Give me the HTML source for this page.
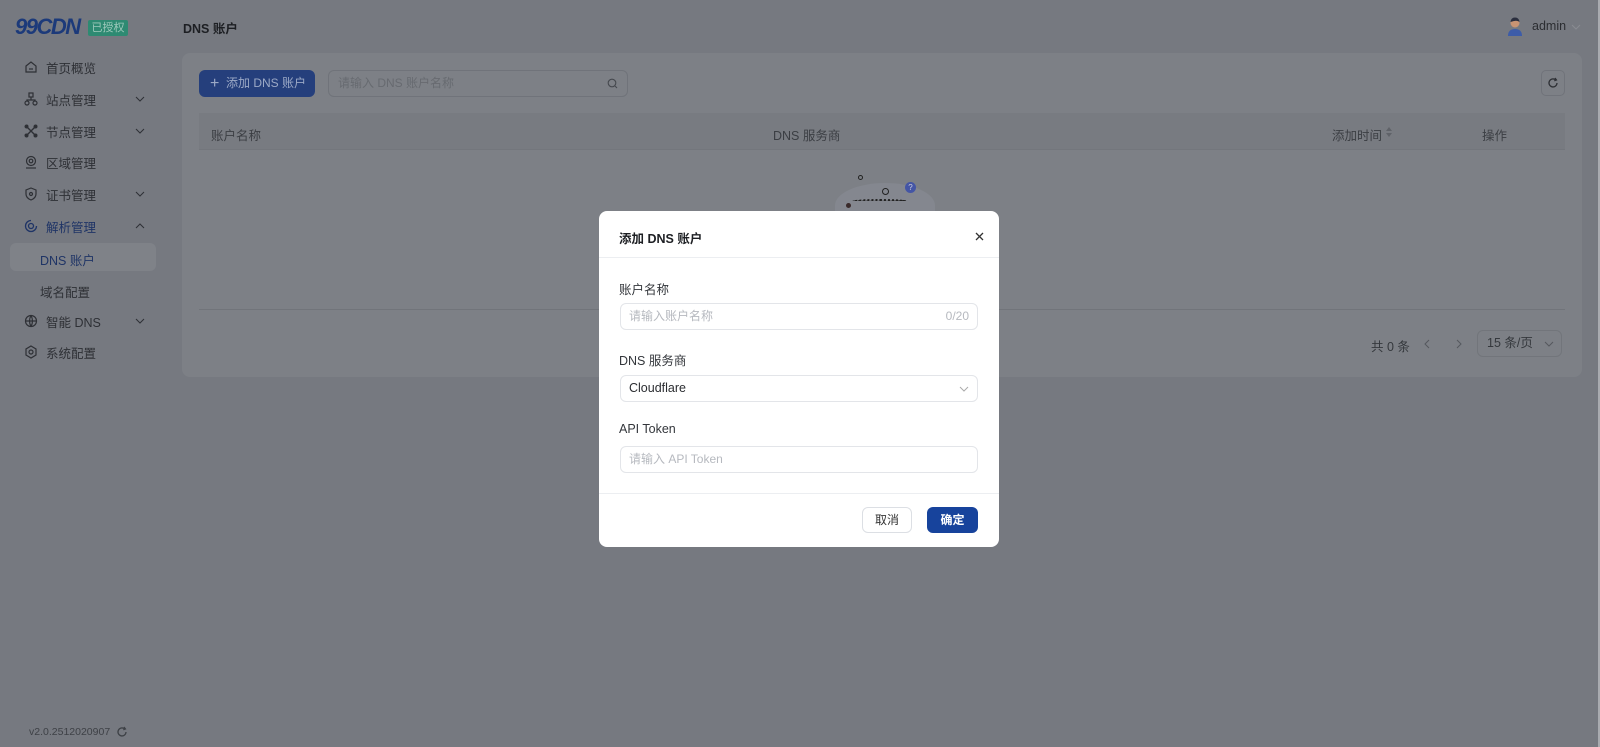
<!DOCTYPE html>
<html><head><meta charset="utf-8">
<style>
*{box-sizing:border-box;margin:0;padding:0}
body{width:1600px;height:747px;overflow:hidden;background:#767980;font-family:"Liberation Sans","Noto Sans CJK SC",sans-serif;font-size:12.5px;color:#2b2d31;position:relative}
.a{position:absolute}
.side{color:#2e3035;font-size:12.5px}
.mi{position:absolute;left:24px;display:flex;align-items:center;height:20px}
.mi svg{width:14px;height:14px;margin-right:8px}
.chev{position:absolute;left:135px;width:10px;height:10px}
.card{left:182px;top:53px;width:1400px;height:324px;background:#7d8086;border-radius:8px}
.modal{left:599px;top:211px;width:400px;height:336px;background:#fff;border-radius:8px}
.inp{position:absolute;left:21px;width:358px;height:27px;border:1px solid #e3e5e9;border-radius:6px;font-size:12px;color:#b6b9bf;padding-left:8px;line-height:25px}
.lbl{position:absolute;left:20px;font-size:12.5px;color:#33363b}
</style></head><body>
<div class="a" style="left:15px;top:16px;font-family:'Liberation Sans',sans-serif;font-weight:bold;font-style:italic;font-size:22px;color:#1c3a7a;letter-spacing:-1.5px;line-height:22px">99CDN</div>
<div class="a" style="left:88px;top:20px;width:40px;height:16px;background:#2e8a72;color:#9ec9bb;font-size:11px;text-align:center;line-height:16px;border-radius:2px">已授权</div>
<div class="a" style="left:183px;top:18px;font-weight:bold;font-size:12.5px;color:#1d1f23">DNS 账户</div>
<svg class="a" style="left:1507px;top:16px" width="16" height="20" viewBox="0 0 16 20"><circle cx="8" cy="7" r="4.5" fill="#c99473"/><path d="M3.5 6 Q4 1.5 8 1.5 Q12 1.5 12.5 6 Q10 3.5 3.5 6Z" fill="#2a2e3e"/><path d="M1 20 Q1 13 8 13 Q15 13 15 20Z" fill="#3d5ca8"/></svg>
<div class="a" style="left:1532px;top:19px;font-size:12.5px;color:#2b2d31">admin</div>
<svg class="a" style="left:1571px;top:23px" width="10" height="8"><path d="M1 2 L5 6 L9 2" stroke="#8a8c92" fill="none"/></svg>
<div class="side">
<div class="mi" style="top:57px"><svg viewBox="0 0 14 14" fill="none" stroke="#2e3035" stroke-width="1.2"><path d="M2 6 L7 2 L12 6 V12 H2Z"/><path d="M5 9 H9"/></svg>首页概览</div>
<div class="mi" style="top:89px"><svg viewBox="0 0 14 14" fill="none" stroke="#2e3035" stroke-width="1.2"><rect x="5" y="1" width="4" height="4"/><circle cx="3" cy="11" r="2"/><circle cx="11" cy="11" r="2"/><path d="M7 5 V8 M3 9 V8 H11 V9"/></svg>站点管理</div>
<svg class="chev" style="top:94px" viewBox="0 0 10 10"><path d="M1 3 L5 7 L9 3" stroke="#2e3035" fill="none"/></svg>
<div class="mi" style="top:121px"><svg viewBox="0 0 14 14" fill="none" stroke="#2e3035" stroke-width="1.4"><path d="M2 2 L12 12 M12 2 L2 12"/><circle cx="2.5" cy="2.5" r="1.3"/><circle cx="11.5" cy="2.5" r="1.3"/><circle cx="2.5" cy="11.5" r="1.3"/><circle cx="11.5" cy="11.5" r="1.3"/></svg>节点管理</div>
<svg class="chev" style="top:126px" viewBox="0 0 10 10"><path d="M1 3 L5 7 L9 3" stroke="#2e3035" fill="none"/></svg>
<div class="mi" style="top:152px"><svg viewBox="0 0 14 14" fill="none" stroke="#2e3035" stroke-width="1.2"><circle cx="7" cy="6" r="4.5"/><circle cx="7" cy="6" r="1.8"/><path d="M2 13 H12"/></svg>区域管理</div>
<div class="mi" style="top:184px"><svg viewBox="0 0 14 14" fill="none" stroke="#2e3035" stroke-width="1.2"><path d="M7 1 L12 3 V7 Q12 11 7 13 Q2 11 2 7 V3Z"/><circle cx="7" cy="7" r="1.5"/></svg>证书管理</div>
<svg class="chev" style="top:189px" viewBox="0 0 10 10"><path d="M1 3 L5 7 L9 3" stroke="#2e3035" fill="none"/></svg>
<div class="mi" style="top:216px;color:#1f3466"><svg viewBox="0 0 14 14" fill="none" stroke="#1f3466" stroke-width="1.3"><path d="M7 1.5 A5.5 5.5 0 1 0 12.5 7"/><circle cx="7" cy="7" r="2.5"/></svg>解析管理</div>
<svg class="chev" style="top:221px" viewBox="0 0 10 10"><path d="M1 7 L5 3 L9 7" stroke="#2e3035" fill="none"/></svg>
<div class="a" style="left:10px;top:243px;width:146px;height:28px;background:#7f8288;border-radius:6px"></div>
<div class="a" style="left:40px;top:250px;color:#1f3466">DNS 账户</div>
<div class="a" style="left:40px;top:282px">域名配置</div>
<div class="mi" style="top:311px"><svg viewBox="0 0 14 14" fill="none" stroke="#2e3035" stroke-width="1.2"><circle cx="7" cy="7" r="5.5"/><path d="M1.5 7 H12.5 M7 1.5 Q4 7 7 12.5 M7 1.5 Q10 7 7 12.5"/></svg>智能 DNS</div>
<svg class="chev" style="top:316px" viewBox="0 0 10 10"><path d="M1 3 L5 7 L9 3" stroke="#2e3035" fill="none"/></svg>
<div class="mi" style="top:342px"><svg viewBox="0 0 14 14" fill="none" stroke="#2e3035" stroke-width="1.2"><path d="M7 1 L12 4 V10 L7 13 L2 10 V4Z"/><circle cx="7" cy="7" r="2"/></svg>系统配置</div>
</div>
<div class="a" style="left:29px;top:726px;font-size:10.5px;color:#3e4146">v2.0.2512020907</div>
<svg class="a" style="left:116px;top:726px" width="12" height="12" viewBox="0 0 12 12"><path d="M10 6 A4 4 0 1 1 8.5 2.8" stroke="#3e4146" stroke-width="1.3" fill="none"/><path d="M8 1 L9.5 3 L7.3 3.8" stroke="#3e4146" stroke-width="1.2" fill="none"/></svg>
<div class="a card"></div>
<div class="a" style="left:199px;top:70px;width:116px;height:27px;background:#253f7c;border-radius:6px;color:#9ca9c6;font-size:12px;line-height:27px;padding-left:11px;white-space:nowrap"><span style="font-size:16px;vertical-align:-1px">+</span>&nbsp; 添加 DNS 账户</div>
<div class="a" style="left:328px;top:70px;width:300px;height:27px;border:1px solid #70737a;border-radius:6px;color:#676a70;font-size:12px;line-height:25px;padding-left:9px">请输入 DNS 账户名称</div>
<svg class="a" style="left:607px;top:78px" width="11" height="11" viewBox="0 0 11 11"><circle cx="5" cy="5" r="3.8" stroke="#45484e" fill="none" stroke-width="1.1"/><path d="M8 8 L10 10" stroke="#45484e" stroke-width="1.1"/></svg>
<div class="a" style="left:1541px;top:70px;width:24px;height:26px;border:1px solid #70737a;border-radius:5px"></div>
<svg class="a" style="left:1547px;top:77px" width="12" height="12" viewBox="0 0 12 12"><path d="M10 6 A4 4 0 1 1 8.5 2.8" stroke="#2e3035" stroke-width="1.3" fill="none"/><path d="M8 1 L9.5 3 L7.3 3.8" stroke="#2e3035" stroke-width="1.2" fill="none"/></svg>
<div class="a" style="left:199px;top:113px;width:1366px;height:37px;background:#787b81;border-bottom:1px solid #73767c"></div>
<div class="a" style="left:211px;top:125px;color:#3b3e43">账户名称</div>
<div class="a" style="left:773px;top:125px;color:#3b3e43">DNS 服务商</div>
<div class="a" style="left:1332px;top:125px;color:#3b3e43">添加时间</div>
<svg class="a" style="left:1385px;top:126px" width="8" height="12"><path d="M1 5 L4 1 L7 5Z M1 7 L4 11 L7 7Z" fill="#5f6268"/></svg>
<div class="a" style="left:1482px;top:125px;color:#3b3e43">操作</div>
<div class="a" style="left:835px;top:183px;width:100px;height:45px;background:#84878f;border-radius:50% 50% 10px 10px"></div>
<div class="a" style="left:858px;top:175px;width:5px;height:5px;border:1.5px solid #222;border-radius:50%"></div>
<div class="a" style="left:882px;top:188px;width:7px;height:7px;border:1.5px solid #222;border-radius:50%"></div>
<div class="a" style="left:846px;top:203px;width:5px;height:5px;background:#3a2a2a;border-radius:50%"></div>
<div class="a" style="left:905px;top:182px;width:11px;height:11px;background:#4455a5;border-radius:50%;color:#ccd;font-size:8px;text-align:center;line-height:11px">?</div>
<div class="a" style="left:852px;top:199px;width:56px;height:4px;border-top:2px dotted #222;border-radius:50%"></div>
<div class="a" style="left:199px;top:309px;width:1366px;height:1px;background:#71747a"></div>
<div class="a" style="left:1371px;top:336px;color:#35383d">共 0 条</div>
<svg class="a" style="left:1423px;top:339px" width="8" height="10"><path d="M6 1 L2 5 L6 9" stroke="#55585e" fill="none"/></svg>
<svg class="a" style="left:1455px;top:339px" width="8" height="10"><path d="M2 1 L6 5 L2 9" stroke="#55585e" fill="none"/></svg>
<div class="a" style="left:1477px;top:330px;width:85px;height:27px;border:1px solid #72757b;border-radius:6px;color:#35383d;line-height:25px;padding-left:9px">15 条/页</div>
<svg class="a" style="left:1544px;top:340px" width="10" height="8"><path d="M1 2 L5 6 L9 2" stroke="#55585e" fill="none"/></svg>
<div class="a" style="left:1598px;top:0;width:2px;height:747px;background:#a9abb0"></div>
<div class="a modal">
  <div class="a" style="left:20px;top:17px;font-weight:bold;font-size:12.5px;color:#1d1f23">添加 DNS 账户</div>
  <svg class="a" style="left:376px;top:21px" width="9" height="9"><path d="M1 1 L8 8 M8 1 L1 8" stroke="#333" stroke-width="1.3"/></svg>
  <div class="a" style="left:0;top:46px;width:400px;height:1px;background:#eceef1"></div>
  <div class="lbl" style="top:68px">账户名称</div>
  <div class="inp" style="top:92px">请输入账户名称<span style="position:absolute;right:8px;color:#b6b9bf">0/20</span></div>
  <div class="lbl" style="top:139px">DNS 服务商</div>
  <div class="inp" style="top:164px;color:#2b2d31;font-size:12.5px">Cloudflare</div>
  <svg class="a" style="left:360px;top:174px" width="10" height="8"><path d="M1 2 L5 6 L9 2" stroke="#aaa" fill="none"/></svg>
  <div class="lbl" style="top:211px">API Token</div>
  <div class="inp" style="top:235px">请输入 API Token</div>
  <div class="a" style="left:0;top:282px;width:400px;height:1px;background:#eceef1"></div>
  <div class="a" style="left:263px;top:296px;width:50px;height:26px;border:1px solid #dcdfe4;border-radius:6px;text-align:center;line-height:24px;font-size:12px;color:#333">取消</div>
  <div class="a" style="left:328px;top:296px;width:51px;height:26px;background:#17439c;border-radius:6px;text-align:center;line-height:26px;font-size:12px;color:#fff;font-weight:bold">确定</div>
</div>
</body></html>
